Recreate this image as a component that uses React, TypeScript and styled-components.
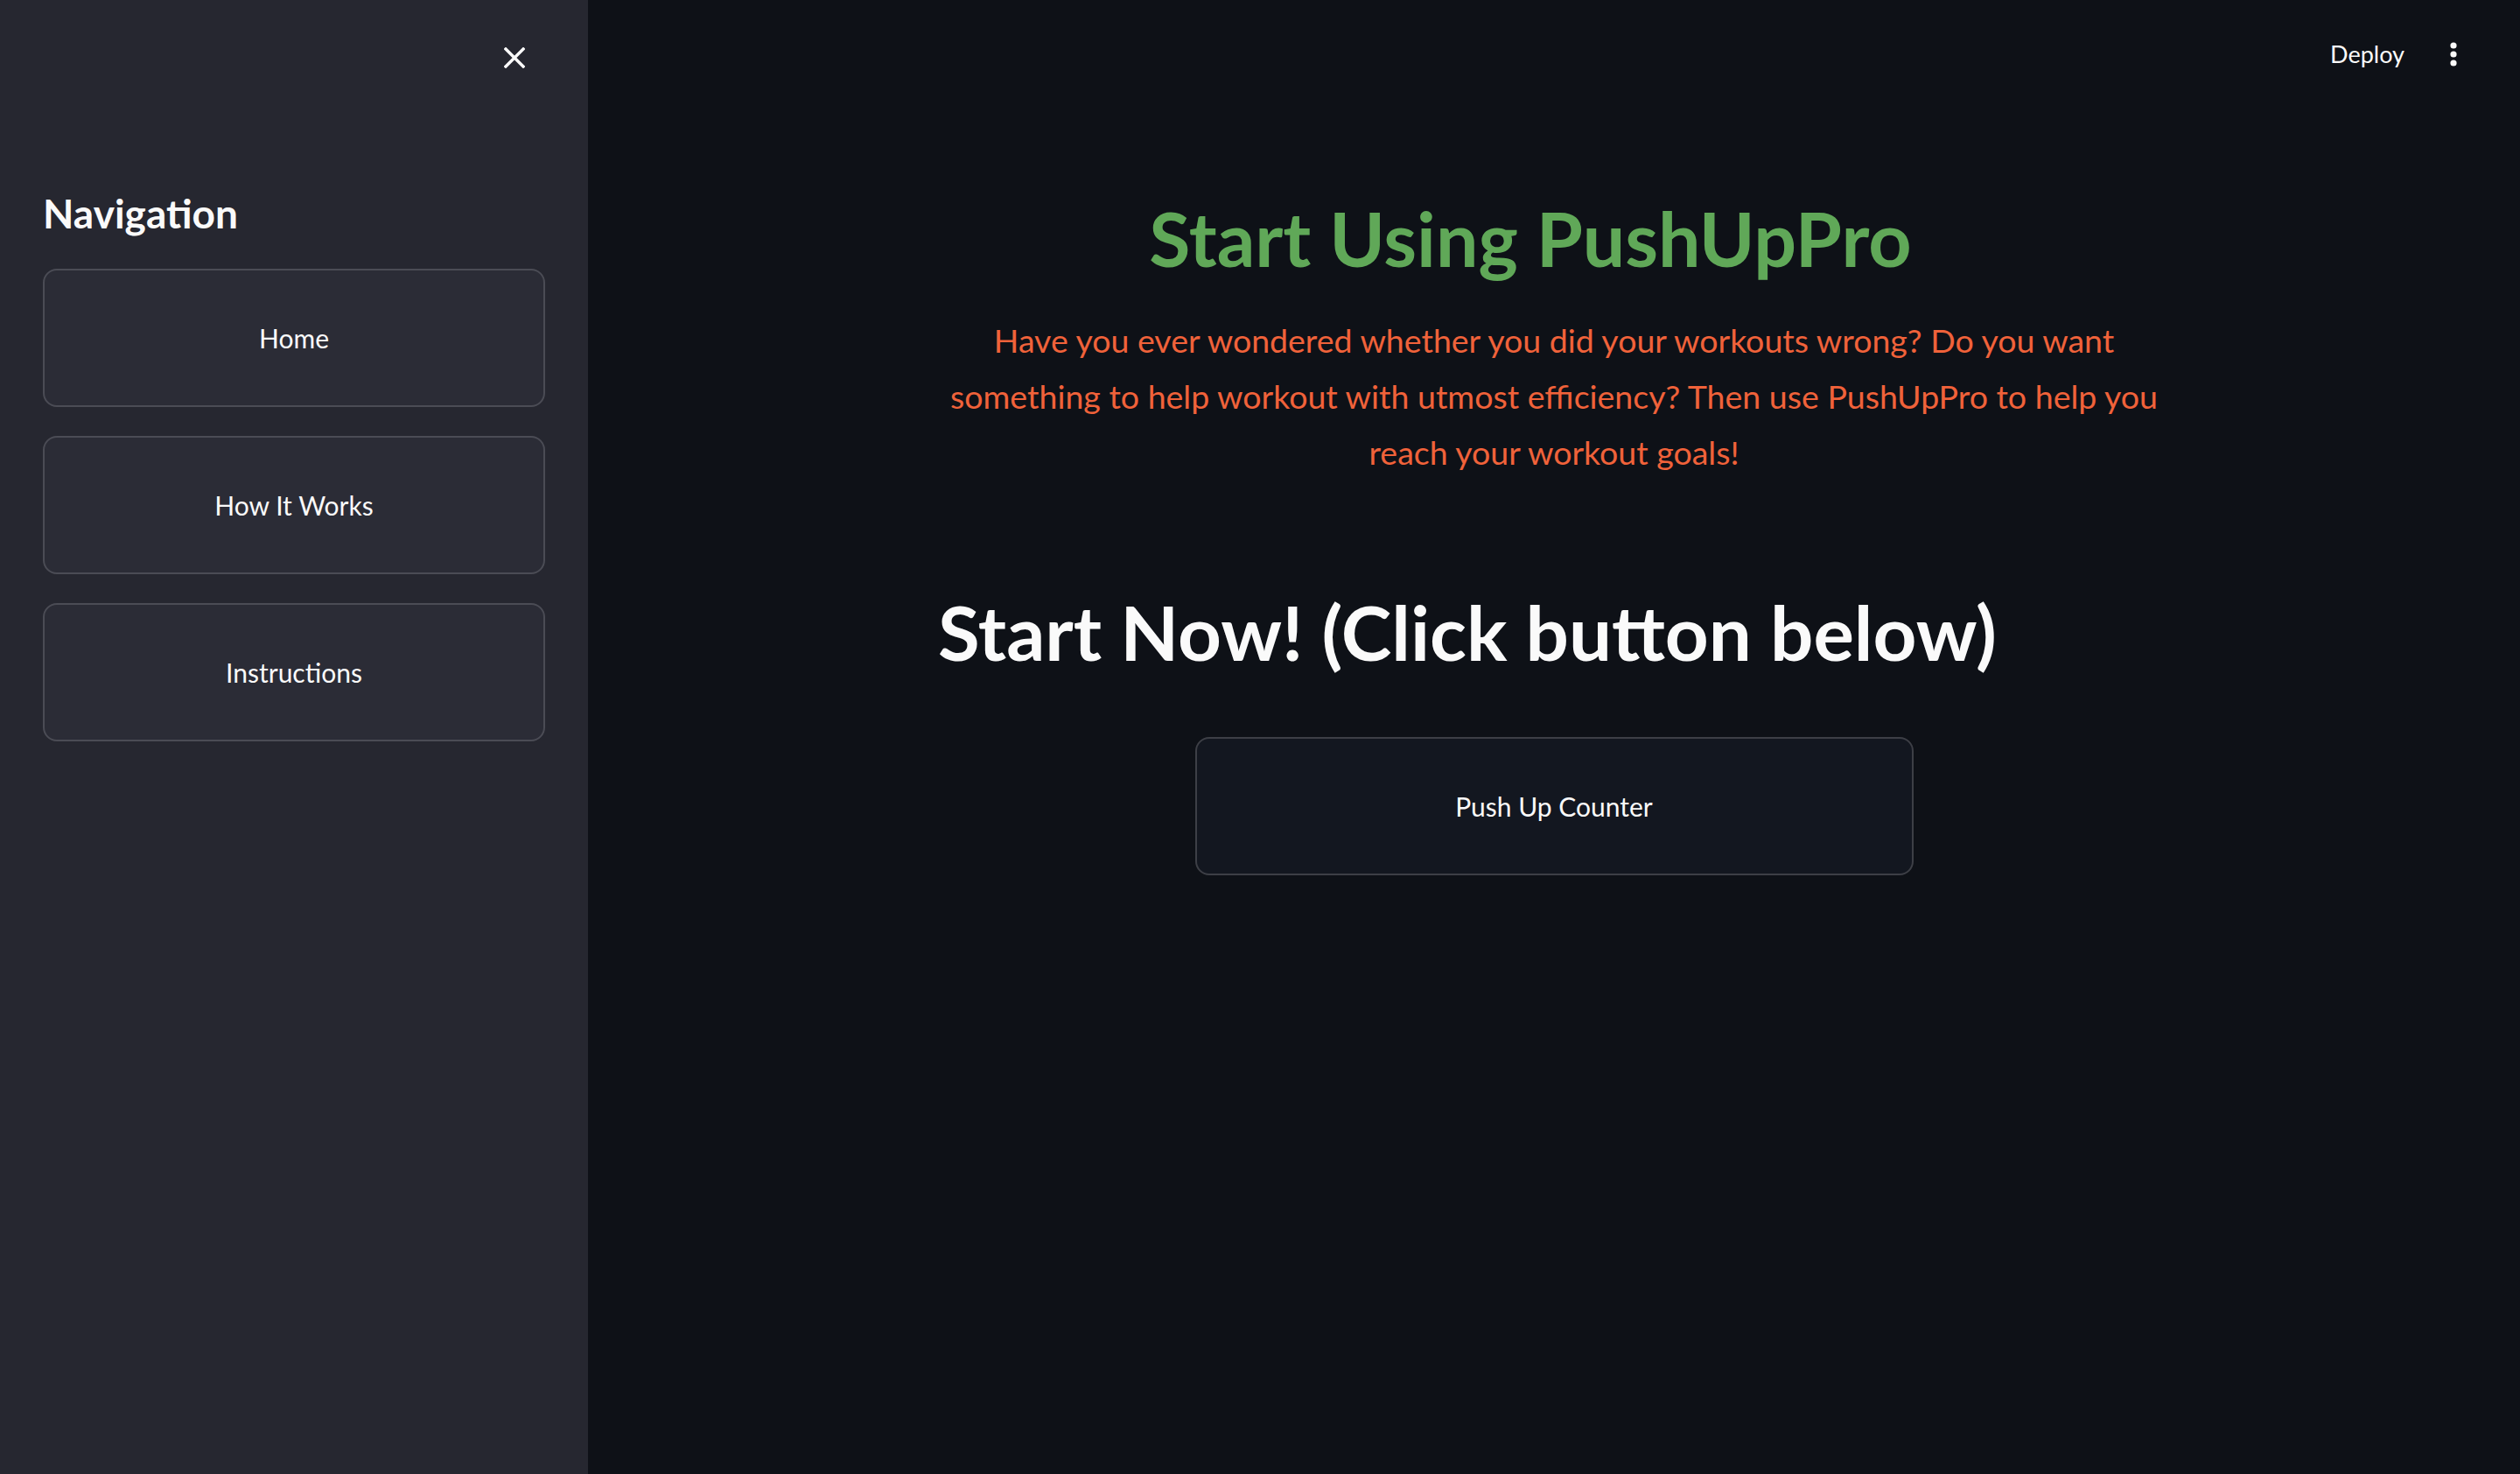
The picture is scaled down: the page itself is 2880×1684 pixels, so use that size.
import React from 'react';
import styled, {createGlobalStyle} from 'styled-components';

const GlobalStyle = createGlobalStyle`
  html, body {
    margin: 0;
    padding: 0;
    background: #0e1117;
  }
  body {
    font-family: Lato, "Liberation Sans", sans-serif;
    color: #fafafa;
  }
  * {
    box-sizing: border-box;
  }
`;

const navItems = ['Home', 'How It Works', 'Instructions'];

const App: React.FC = () => {
    return (
        <>
            <GlobalStyle/>
            <Page>
                <Sidebar>
                    <SidebarHeader>
                        <IconButton aria-label="Close sidebar">
                            <svg width="24" height="24" viewBox="0 0 24 24" fill="none">
                                <path d="M2 2L22 22M22 2L2 22" stroke="#fafafa" strokeWidth="3.4" strokeLinecap="square"/>
                            </svg>
                        </IconButton>
                    </SidebarHeader>
                    <SidebarTitle>Navigation</SidebarTitle>
                    <NavList>
                        {navItems.map(item => (
                            <Button key={item} $variant="sidebar">{item}</Button>
                        ))}
                    </NavList>
                </Sidebar>
                <Main>
                    <Toolbar>
                        <DeployLink>Deploy</DeployLink>
                        <MenuButton aria-label="Main menu">
                            <svg width="8" height="28" viewBox="0 0 8 28" fill="#fafafa">
                                <circle cx="4" cy="4" r="3.6"/>
                                <circle cx="4" cy="14" r="3.6"/>
                                <circle cx="4" cy="24" r="3.6"/>
                            </svg>
                        </MenuButton>
                    </Toolbar>
                    <Block>
                        <Title>Start Using PushUpPro</Title>
                        <Intro>
                            Have you ever wondered whether you did your workouts wrong? Do you want
                            something to help workout with utmost efficiency? Then use PushUpPro to help you
                            reach your workout goals!
                        </Intro>
                        <Heading>Start Now! (Click button below)</Heading>
                        <Columns>
                            <div/>
                            <Button $variant="main">Push Up Counter</Button>
                            <div/>
                        </Columns>
                    </Block>
                </Main>
            </Page>
        </>
    )
}
export default App;

const Page = styled.div`
  display: flex;
  min-height: 1684px;
  height: 100vh;
`;

const Sidebar = styled.aside`
  width: 672px;
  flex-shrink: 0;
  background: #262730;
  padding: 0 49px 0 49px;
  display: flex;
  flex-direction: column;
`;

const SidebarHeader = styled.div`
  display: flex;
  justify-content: flex-end;
  padding-top: 54px;
  padding-right: 23px;
  height: 216px;
`;

const IconButton = styled.button`
  background: none;
  border: none;
  padding: 0;
  width: 24px;
  height: 24px;
  cursor: pointer;
  display: flex;
`;

const SidebarTitle = styled.h2`
  margin: 0;
  font-size: 46px;
  font-weight: 700;
  line-height: 1.2;
  color: #fafafa;
`;

const NavList = styled.div`
  display: flex;
  flex-direction: column;
  gap: 33px;
  margin-top: 36px;
`;

const Button = styled.button<{ $variant: 'sidebar' | 'main' }>`
  width: 100%;
  height: 158px;
  border-radius: 16px;
  border: 2px solid ${p => p.$variant === 'sidebar' ? '#4b4c55' : '#3d3f46'};
  background: ${p => p.$variant === 'sidebar' ? '#2b2c36' : '#131720'};
  color: #fafafa;
  font-family: Lato, "Liberation Sans", sans-serif;
  font-size: 30px;
  font-weight: 400;
  cursor: pointer;
  display: flex;
  align-items: center;
  justify-content: center;
`;

const Main = styled.main`
  flex: 1;
  display: flex;
  flex-direction: column;
  align-items: center;
`;

const Toolbar = styled.header`
  align-self: stretch;
  display: flex;
  justify-content: flex-end;
  align-items: center;
  height: 124px;
  padding-right: 72px;
  gap: 52px;
`;

const DeployLink = styled.span`
  font-size: 27px;
  color: #fafafa;
  line-height: 1.2;
`;

const MenuButton = styled.button`
  background: none;
  border: none;
  padding: 0;
  display: flex;
  cursor: pointer;
`;

const Block = styled.section`
  width: 1408px;
  display: flex;
  flex-direction: column;
  padding-top: 96px;
`;

const Title = styled.h1`
  margin: 0;
  padding-right: 54px;
  text-align: center;
  font-size: 86px;
  font-weight: 700;
  line-height: 1.2;
  color: #60a858;
`;

const Intro = styled.p`
  margin: 34px 0 0;
  text-align: center;
  font-size: 37.5px;
  line-height: 64px;
  color: #f0623a;
`;

const Heading = styled.h2`
  margin: 121px 0 0;
  font-size: 87px;
  font-weight: 700;
  line-height: 1.2;
  color: #fafafa;
`;

const Columns = styled.div`
  display: grid;
  grid-template-columns: 1fr 821px 1fr;
  margin-top: 67px;
`;
